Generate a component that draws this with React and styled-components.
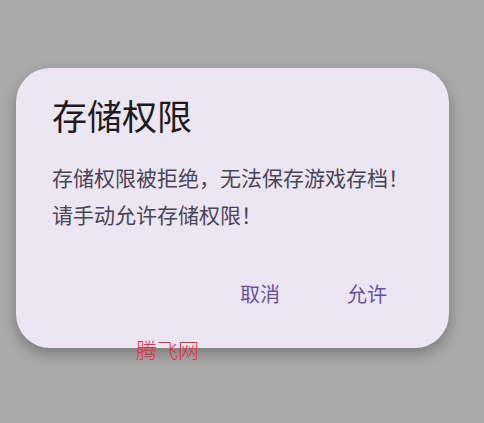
import React from "react";
import styled, { createGlobalStyle } from "styled-components";

const GlobalStyle = createGlobalStyle`
  html, body {
    margin: 0;
    padding: 0;
    background: #aaa9aa;
    font-family: Roboto, "Noto Sans CJK SC", sans-serif;
  }
`;

const Screen = styled.div`
  position: relative;
  width: 484px;
  height: 423px;
  padding-top: 68px;
  box-sizing: border-box;
  overflow: hidden;
`;

const Dialog = styled.div`
  margin-left: 16px;
  width: 433px;
  height: 280px;
  box-sizing: border-box;
  padding: 27px 30px 31px 36px;
  background: #ece6f2;
  border-radius: 34px;
  box-shadow: 0 6px 14px rgba(0, 0, 0, 0.28);
  display: flex;
  flex-direction: column;
`;

const Title = styled.h2`
  margin: 0;
  font-size: 35px;
  line-height: 48px;
  font-weight: 400;
  color: #1d1b20;
`;

const Message = styled.p`
  margin: 18px 0 0;
  font-size: 21px;
  line-height: 37px;
  color: #4a4458;
  white-space: nowrap;
`;

const Actions = styled.div`
  margin-top: auto;
  padding-right: 32px;
  display: flex;
  justify-content: flex-end;
  gap: 67px;
  height: 48px;
  align-items: center;
`;

const TextButton = styled.button`
  border: none;
  background: none;
  padding: 0;
  font-family: inherit;
  font-size: 20px;
  color: #6750a4;
  cursor: pointer;
`;

const Watermark = styled.div`
  position: absolute;
  left: 136px;
  top: 336px;
  font-size: 21px;
  line-height: 26px;
  color: #ee2d3c;
  font-weight: 300;
  font-family: "Noto Sans CJK SC", sans-serif;
`;

export default function App() {
  return (
    <>
      <GlobalStyle />
      <Screen>
        <Dialog>
          <Title>存储权限</Title>
          <Message>
            存储权限被拒绝，无法保存游戏存档！
            <br />
            请手动允许存储权限！
          </Message>
          <Actions>
            <TextButton>取消</TextButton>
            <TextButton>允许</TextButton>
          </Actions>
        </Dialog>
        <Watermark>腾飞网</Watermark>
      </Screen>
    </>
  );
}
